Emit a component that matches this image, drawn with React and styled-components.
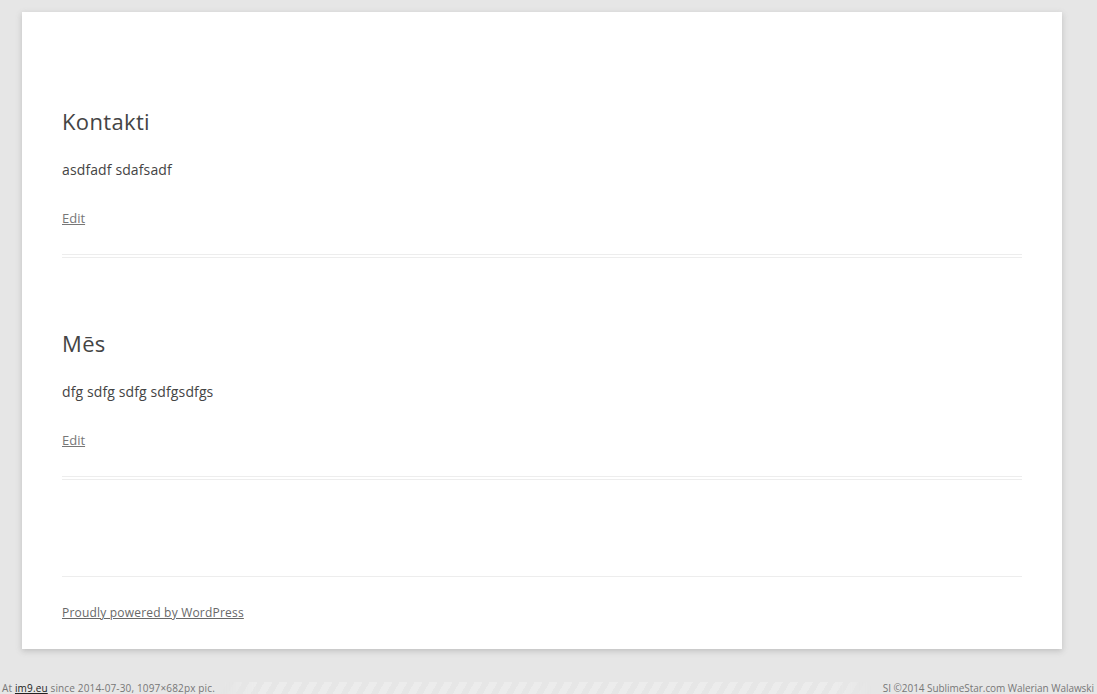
import React from "react";
import styled, { createGlobalStyle } from "styled-components";

const Global = createGlobalStyle`
  html, body { margin: 0; padding: 0; background: #e6e6e6; }
  body { font-family: "Open Sans", "DejaVu Sans", sans-serif; color: #444; }
`;

const Screen = styled.div`
  height: 694px;
  display: flex;
  flex-direction: column;
  overflow: hidden;
`;

const Page = styled.div`
  width: 1040px;
  margin: 12px 0 0 22px;
  padding: 97px 40px 0;
  box-sizing: border-box;
  background: #fff;
  box-shadow: rgba(100, 100, 100, 0.3) 0 2px 6px;
`;

const Main = styled.main`
  padding-bottom: 23px;
`;

const Article = styled.article`
  margin-bottom: 73px;
  padding-bottom: 24px;
  border-bottom: 4px double #ededed;
`;

const Title = styled.h1`
  margin: 0 0 25px;
  font-size: 22px;
  line-height: 24px;
  font-weight: normal;
  letter-spacing: 0.35px;
  color: #444;
`;

const Text = styled.p`
  margin: 0 0 24px;
  font-size: 14px;
  line-height: 24px;
  letter-spacing: 0.12px;
  color: #444;
`;

const Meta = styled.footer`
  font-size: 13px;
  line-height: 24px;
  color: #757575;
`;

const MetaLink = styled.a`
  color: #777;
  text-decoration: underline;
`;

const SiteFooter = styled.footer`
  border-top: 1px solid #ededed;
  padding: 24px 0;
  font-size: 12px;
  line-height: 24px;
  letter-spacing: 0.2px;
`;

const FooterLink = styled.a`
  color: #686868;
  text-decoration: underline;
`;

const Strip = styled.div`
  margin-top: auto;
  height: 12px;
  display: flex;
  align-items: center;
  font-family: "Open Sans", "DejaVu Sans", sans-serif;
  font-size: 10px;
  line-height: 12px;
  color: #777;
  white-space: nowrap;
`;

const StripText = styled.span`
  padding: ${(p) => (p.$right ? "0 3px 0 0" : "0 0 0 2px")};
  letter-spacing: ${(p) => (p.$right ? "-0.05px" : "0.15px")};
`;

const StripLink = styled.a`
  color: #222;
  text-decoration: underline;
`;

const Stripes = styled.div`
  flex: 1;
  align-self: stretch;
  margin: 0 10px 0 4px;
  background: repeating-linear-gradient(
    -60deg,
    #e6e6e6 0px,
    #e6e6e6 6px,
    #ececec 6px,
    #ececec 13px
  );
  -webkit-mask-image: linear-gradient(90deg, transparent, #000 6%, #000 94%, transparent);
  mask-image: linear-gradient(90deg, transparent, #000 6%, #000 94%, transparent);
`;

const posts = [
  { title: "Kontakti", body: "asdfadf sdafsadf" },
  { title: "Mēs", body: "dfg sdfg sdfg sdfgsdfgs" },
];

export default function App() {
  return (
    <>
      <Global />
      <Screen>
        <Page>
          <Main>
            {posts.map((p) => (
              <Article key={p.title}>
                <Title>{p.title}</Title>
                <Text>{p.body}</Text>
                <Meta>
                  <MetaLink href="#">Edit</MetaLink>
                </Meta>
              </Article>
            ))}
          </Main>
          <SiteFooter>
            <FooterLink href="#">Proudly powered by WordPress</FooterLink>
          </SiteFooter>
        </Page>
        <Strip>
          <StripText>
            At <StripLink href="#">im9.eu</StripLink> since 2014-07-30, 1097×682px pic.
          </StripText>
          <Stripes />
          <StripText $right>SI ©2014 SublimeStar.com Walerian Walawski</StripText>
        </Strip>
      </Screen>
    </>
  );
}
